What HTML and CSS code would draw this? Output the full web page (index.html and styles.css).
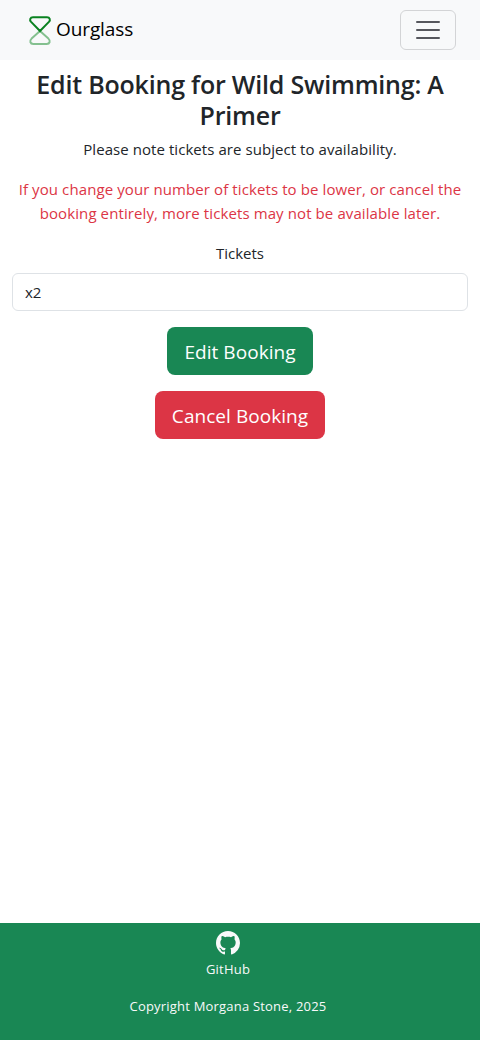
FILE: index.html
```html
<!DOCTYPE html>
<html lang="en">
<head>
<meta charset="utf-8">
<meta name="viewport" content="width=device-width, initial-scale=1">
<title>Edit Booking - Ourglass</title>
<link rel="stylesheet" href="styles.css">
</head>
<body>
<nav class="navbar">
  <a class="brand" href="#">
    <svg class="brand-icon" width="24" height="30" viewBox="0 0 24 30" fill="none" stroke-width="2" stroke-linejoin="round">
      <path class="glass-bottom" d="M12 16 3.6 23.6C1.2 25.9 2.2 29 5.3 29H18.7C21.8 29 22.8 25.9 20.4 23.6Z"/>
      <path class="glass-top" d="M12 16 3.1 6.9C1.2 4.8 2.2 2.3 5 2.3H19C21.8 2.3 22.8 4.8 20.9 6.9Z"/>
    </svg>
    <span class="brand-name">Ourglass</span>
  </a>
  <button class="toggler" type="button" aria-label="Toggle navigation">
    <svg width="30" height="30" viewBox="0 0 30 30" fill="none"><path class="toggler-lines" stroke-linecap="round" stroke-miterlimit="10" stroke-width="2" d="M4 7h22M4 15h22M4 23h22"/></svg>
  </button>
</nav>
<main class="content">
  <h1 class="title">Edit Booking for Wild Swimming: A<br>Primer</h1>
  <p class="note">Please note tickets are subject to availability.</p>
  <p class="warning">If you change your number of tickets to be lower, or cancel the<br>booking entirely, more tickets may not be available later.</p>
  <form class="booking-form">
    <label class="label" for="tickets">Tickets</label>
    <input class="field" id="tickets" type="text" value="x2">
    <button class="btn btn-edit" type="button">Edit Booking</button>
    <button class="btn btn-cancel" type="button">Cancel Booking</button>
  </form>
</main>
<footer class="footer">
  <a class="social" href="#">
    <svg width="24" height="24" viewBox="0 0 16 16" fill="currentColor"><path d="M8 0C3.58 0 0 3.58 0 8c0 3.54 2.29 6.53 5.47 7.59.4.07.55-.17.55-.38 0-.19-.01-.82-.01-1.49-2.01.37-2.53-.49-2.69-.94-.09-.23-.48-.94-.82-1.13-.28-.15-.68-.52-.01-.53.63-.01 1.08.58 1.23.82.72 1.21 1.87.87 2.33.66.07-.52.28-.87.51-1.07-1.78-.2-3.64-.89-3.64-3.95 0-.87.31-1.59.82-2.15-.08-.2-.36-1.02.08-2.12 0 0 .67-.21 2.2.82.64-.18 1.32-.27 2-.27s1.36.09 2 .27c1.53-1.04 2.2-.82 2.2-.82.44 1.1.16 1.92.08 2.12.51.56.82 1.27.82 2.15 0 3.07-1.87 3.75-3.65 3.95.29.25.54.73.54 1.48 0 1.07-.01 1.93-.01 2.2 0 .21.15.46.55.38A8.01 8.01 0 0 0 16 8c0-4.42-3.58-8-8-8"/></svg>
    <span class="social-name">GitHub</span>
  </a>
  <p class="copyright">Copyright Morgana Stone, 2025</p>
</footer>
</body>
</html>
```

FILE: styles.css
```css
* { box-sizing: border-box; }
body {
  margin: 0;
  min-height: 100vh;
  display: flex;
  flex-direction: column;
  background: #fff;
  color: #212529;
  font-family: "Open Sans", "Noto Sans", sans-serif;
  font-size: 15px;
  line-height: 24px;
}
.navbar {
  height: 60px;
  padding: 0 24px 0 28px;
  display: flex;
  align-items: center;
  justify-content: space-between;
  background: #f8f9fa;
}
.brand {
  display: flex;
  align-items: center;
  gap: 4px;
  color: #000;
  text-decoration: none;
  font-size: 19px;
  line-height: 30px;
}
.brand-name { padding-bottom: 2px; letter-spacing: -0.1px; }
.brand-icon { flex: none; }
.glass-top { stroke: #0a8220; }
.glass-bottom { stroke: #84c08f; }
.toggler {
  width: 56px;
  height: 40px;
  padding: 0;
  display: flex;
  align-items: center;
  justify-content: center;
  background: transparent;
  border: 1px solid #d3d4d6;
  border-radius: 6px;
}
.toggler-lines { stroke: #56575d; }
.content {
  flex: 1;
  padding: 9px 12px 0;
  text-align: center;
}
.title {
  margin: 0 0 6px;
  font-size: 25px;
  font-weight: 600;
  line-height: 31px;
  letter-spacing: -0.2px;
  white-space: nowrap;
}
.note, .warning { margin: 0 0 16px; white-space: nowrap; }
.note { letter-spacing: 0.06px; }
.warning { color: #dc3545; letter-spacing: 0.1px; }
.booking-form {
  display: flex;
  flex-direction: column;
  align-items: center;
}
.label { margin-bottom: 8px; }
.field {
  width: 100%;
  height: 38px;
  padding: 6px 12px;
  margin-bottom: 16px;
  border: 1px solid #dee2e6;
  border-radius: 6px;
  background: #fff;
  color: #212529;
  font: inherit;
}
.btn {
  width: 146px;
  height: 48px;
  padding: 2px 0 0;
  margin-bottom: 16px;
  border: 0;
  border-radius: 8px;
  color: #fff;
  font: inherit;
  font-size: 19px;
  line-height: 30px;
  letter-spacing: 0.05px;
  white-space: nowrap;
}
.btn-edit { background: #198754; }
.btn-cancel { width: 170px; background: #dc3545; }
.footer {
  height: 117px;
  padding: 8px 24px 0 0;
  display: flex;
  flex-direction: column;
  align-items: center;
  background: #198754;
  color: #f8f9fa;
  font-size: 13px;
  line-height: 21px;
  letter-spacing: 0.2px;
}
.social {
  display: flex;
  flex-direction: column;
  align-items: center;
  gap: 4px;
  color: inherit;
  text-decoration: none;
}
.copyright { margin: 16px 0 0; }
```
